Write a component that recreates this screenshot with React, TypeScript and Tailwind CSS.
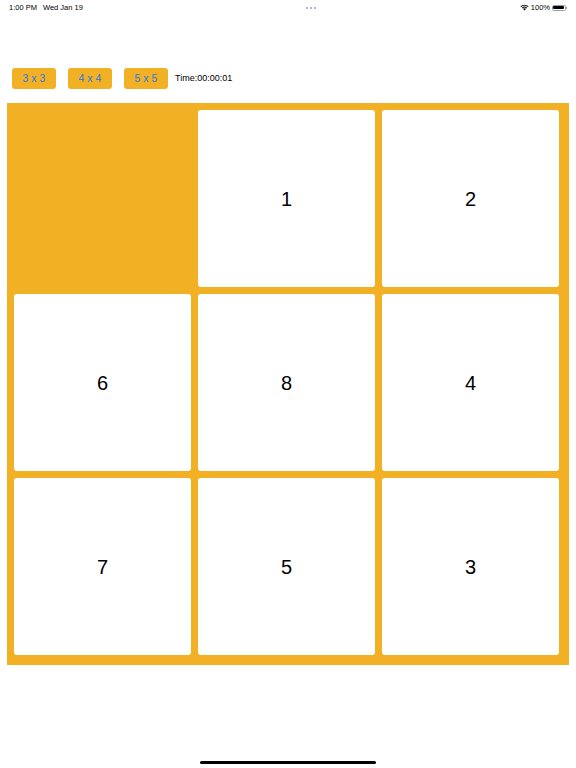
import React from 'react';

const tiles: (number | null)[] = [null, 1, 2, 6, 8, 4, 7, 5, 3];

export default function App() {
  return (
    <div className="relative w-[576px] h-[768px] bg-white overflow-hidden" style={{ fontFamily: '"Helvetica Neue", "Liberation Sans", Arial, sans-serif' }}>
      {/* status bar */}
      <div className="flex items-center justify-between h-[14px] px-[9px] pt-[1px] text-[7.5px] text-black">
        <div className="flex gap-[6px]">
          <span>1:00 PM</span>
          <span>Wed Jan 19</span>
        </div>
        <div className="flex gap-[2px] ml-[20px]">
          <span className="w-[2px] h-[2px] rounded-full bg-gray-400" />
          <span className="w-[2px] h-[2px] rounded-full bg-gray-400" />
          <span className="w-[2px] h-[2px] rounded-full bg-gray-400" />
        </div>
        <div className="flex items-center gap-[2px]">
          <svg width="9" height="7" viewBox="0 0 12 9">
            <path d="M6 8.5 L8 6.3 A3 3 0 0 0 4 6.3 Z" fill="black" />
            <path d="M2.5 4.8 A5 5 0 0 1 9.5 4.8 L8.6 5.8 A3.7 3.7 0 0 0 3.4 5.8 Z" fill="black" />
            <path d="M0.5 2.9 A8 8 0 0 1 11.5 2.9 L10.5 3.9 A6.6 6.6 0 0 0 1.5 3.9 Z" fill="black" />
          </svg>
          <span>100%</span>
          <div className="flex items-center">
            <div className="w-[14px] h-[6px] rounded-[1.5px] border border-gray-400 p-[0.5px]">
              <div className="w-full h-full bg-black rounded-[1px]" />
            </div>
            <div className="w-[1px] h-[2px] bg-gray-400" />
          </div>
        </div>
      </div>

      {/* controls */}
      <div className="flex items-center mt-[54px] pl-[12px] gap-[12px]">
        <button className="w-[44px] h-[21px] rounded-[3px] bg-[#f2b124] text-[#2f78dc] text-[10.5px]">3 x 3</button>
        <button className="w-[44px] h-[21px] rounded-[3px] bg-[#f2b124] text-[#2f78dc] text-[10.5px]">4 x 4</button>
        <button className="w-[44px] h-[21px] rounded-[3px] bg-[#f2b124] text-[#2f78dc] text-[10.5px]">5 x 5</button>
        <span className="-ml-[5px] text-[9px] text-black">Time:00:00:01</span>
      </div>

      {/* board */}
      <div className="ml-[7px] mt-[14px] w-[562px] h-[562px] bg-[#f2b124] pt-[7px] pl-[7px] pr-[10px] pb-[10px] grid grid-cols-3 grid-rows-3 gap-[7px]">
        {tiles.map((t, i) =>
          t === null ? (
            <div key={i} />
          ) : (
            <div key={i} className="bg-white rounded-[3px] flex items-center justify-center text-[20px] text-black">
              {t}
            </div>
          )
        )}
      </div>

      {/* home indicator */}
      <div className="absolute left-[200px] bottom-[4px] w-[176px] h-[3px] rounded-full bg-black" />
    </div>
  );
}
